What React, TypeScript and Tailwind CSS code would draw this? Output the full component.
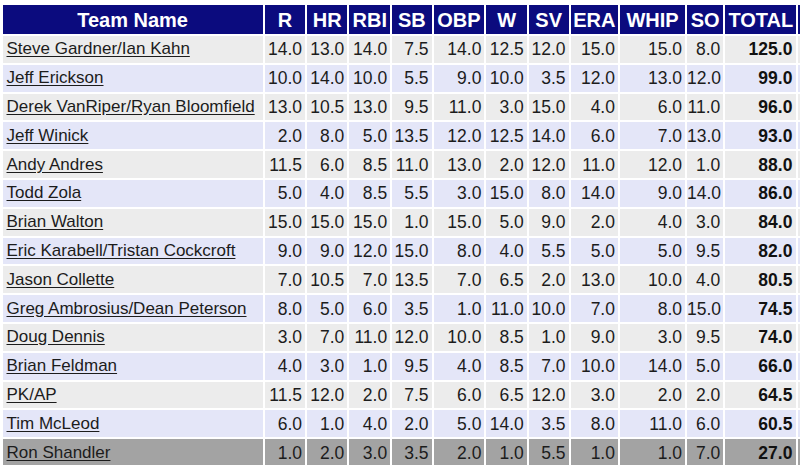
import React from 'react'

type Row = {
  team: string
  stats: string[]
  total: string
}

const columns = ['R', 'HR', 'RBI', 'SB', 'OBP', 'W', 'SV', 'ERA', 'WHIP', 'SO']

const raw = [
  'Steve Gardner/Ian Kahn|14.0 13.0 14.0 7.5 14.0 12.5 12.0 15.0 15.0 8.0|125.0',
  'Jeff Erickson|10.0 14.0 10.0 5.5 9.0 10.0 3.5 12.0 13.0 12.0|99.0',
  'Derek VanRiper/Ryan Bloomfield|13.0 10.5 13.0 9.5 11.0 3.0 15.0 4.0 6.0 11.0|96.0',
  'Jeff Winick|2.0 8.0 5.0 13.5 12.0 12.5 14.0 6.0 7.0 13.0|93.0',
  'Andy Andres|11.5 6.0 8.5 11.0 13.0 2.0 12.0 11.0 12.0 1.0|88.0',
  'Todd Zola|5.0 4.0 8.5 5.5 3.0 15.0 8.0 14.0 9.0 14.0|86.0',
  'Brian Walton|15.0 15.0 15.0 1.0 15.0 5.0 9.0 2.0 4.0 3.0|84.0',
  'Eric Karabell/Tristan Cockcroft|9.0 9.0 12.0 15.0 8.0 4.0 5.5 5.0 5.0 9.5|82.0',
  'Jason Collette|7.0 10.5 7.0 13.5 7.0 6.5 2.0 13.0 10.0 4.0|80.5',
  'Greg Ambrosius/Dean Peterson|8.0 5.0 6.0 3.5 1.0 11.0 10.0 7.0 8.0 15.0|74.5',
  'Doug Dennis|3.0 7.0 11.0 12.0 10.0 8.5 1.0 9.0 3.0 9.5|74.0',
  'Brian Feldman|4.0 3.0 1.0 9.5 4.0 8.5 7.0 10.0 14.0 5.0|66.0',
  'PK/AP|11.5 12.0 2.0 7.5 6.0 6.5 12.0 3.0 2.0 2.0|64.5',
  'Tim McLeod|6.0 1.0 4.0 2.0 5.0 14.0 3.5 8.0 11.0 6.0|60.5',
  'Ron Shandler|1.0 2.0 3.0 3.5 2.0 1.0 5.5 1.0 1.0 7.0|27.0',
]

const rows: Row[] = raw.map(line => {
  const [team, stats, total] = line.split('|')
  return { team, stats: stats.split(' '), total }
})

export default function App() {
  return (
    <div className="w-[800px] h-[465px] overflow-hidden bg-white font-['Liberation_Sans',Arial,sans-serif] text-[#1c1c1c]">
      <table className="table-fixed border-separate border-spacing-x-[2.5px] border-spacing-y-[2px] w-[860.5px] mt-[3px] ml-[0.5px] text-[17.5px] leading-[20px]">
        <colgroup>
          <col className="w-[258px]" />
          <col className="w-[40px]" />
          <col className="w-[40px]" />
          <col className="w-[40.5px]" />
          <col className="w-[39px]" />
          <col className="w-[50.5px]" />
          <col className="w-[40px]" />
          <col className="w-[39.5px]" />
          <col className="w-[47px]" />
          <col className="w-[64.5px]" />
          <col className="w-[36px]" />
          <col className="w-[70.5px]" />
          <col className="w-[60px]" />
        </colgroup>
        <thead>
          <tr className="bg-[#0b0b7e] text-white text-[20px] font-bold">
            <th className="h-[29px] p-0 text-center">Team Name</th>
            {columns.map(c => (
              <th key={c} className="h-[29px] p-0 text-center">{c}</th>
            ))}
            <th className="h-[29px] p-0 text-center">TOTAL</th>
            <th className="h-[29px] p-0" />
          </tr>
        </thead>
        <tbody>
          {rows.map((r, i) => {
            const last = i === rows.length - 1
            const bg = last ? 'bg-[#a3a3a3]' : i % 2 === 0 ? 'bg-[#ececec]' : 'bg-[#e4e6f8]'
            return (
              <tr key={r.team} className={bg}>
                <td className="h-[26.8px] p-0 pl-[4px] whitespace-nowrap text-[17px]">
                  <a href="#" className="underline underline-offset-[2px] text-[#1c1c1c]">{r.team}</a>
                </td>
                {r.stats.map((s, j) => (
                  <td key={j} className="h-[26.8px] p-0 pr-[3px] text-right">{s}</td>
                ))}
                <td className="h-[26.8px] p-0 pr-[4px] text-right font-bold text-[#111]">{r.total}</td>
                <td className="h-[26.8px] p-0" />
              </tr>
            )
          })}
        </tbody>
      </table>
    </div>
  )
}
